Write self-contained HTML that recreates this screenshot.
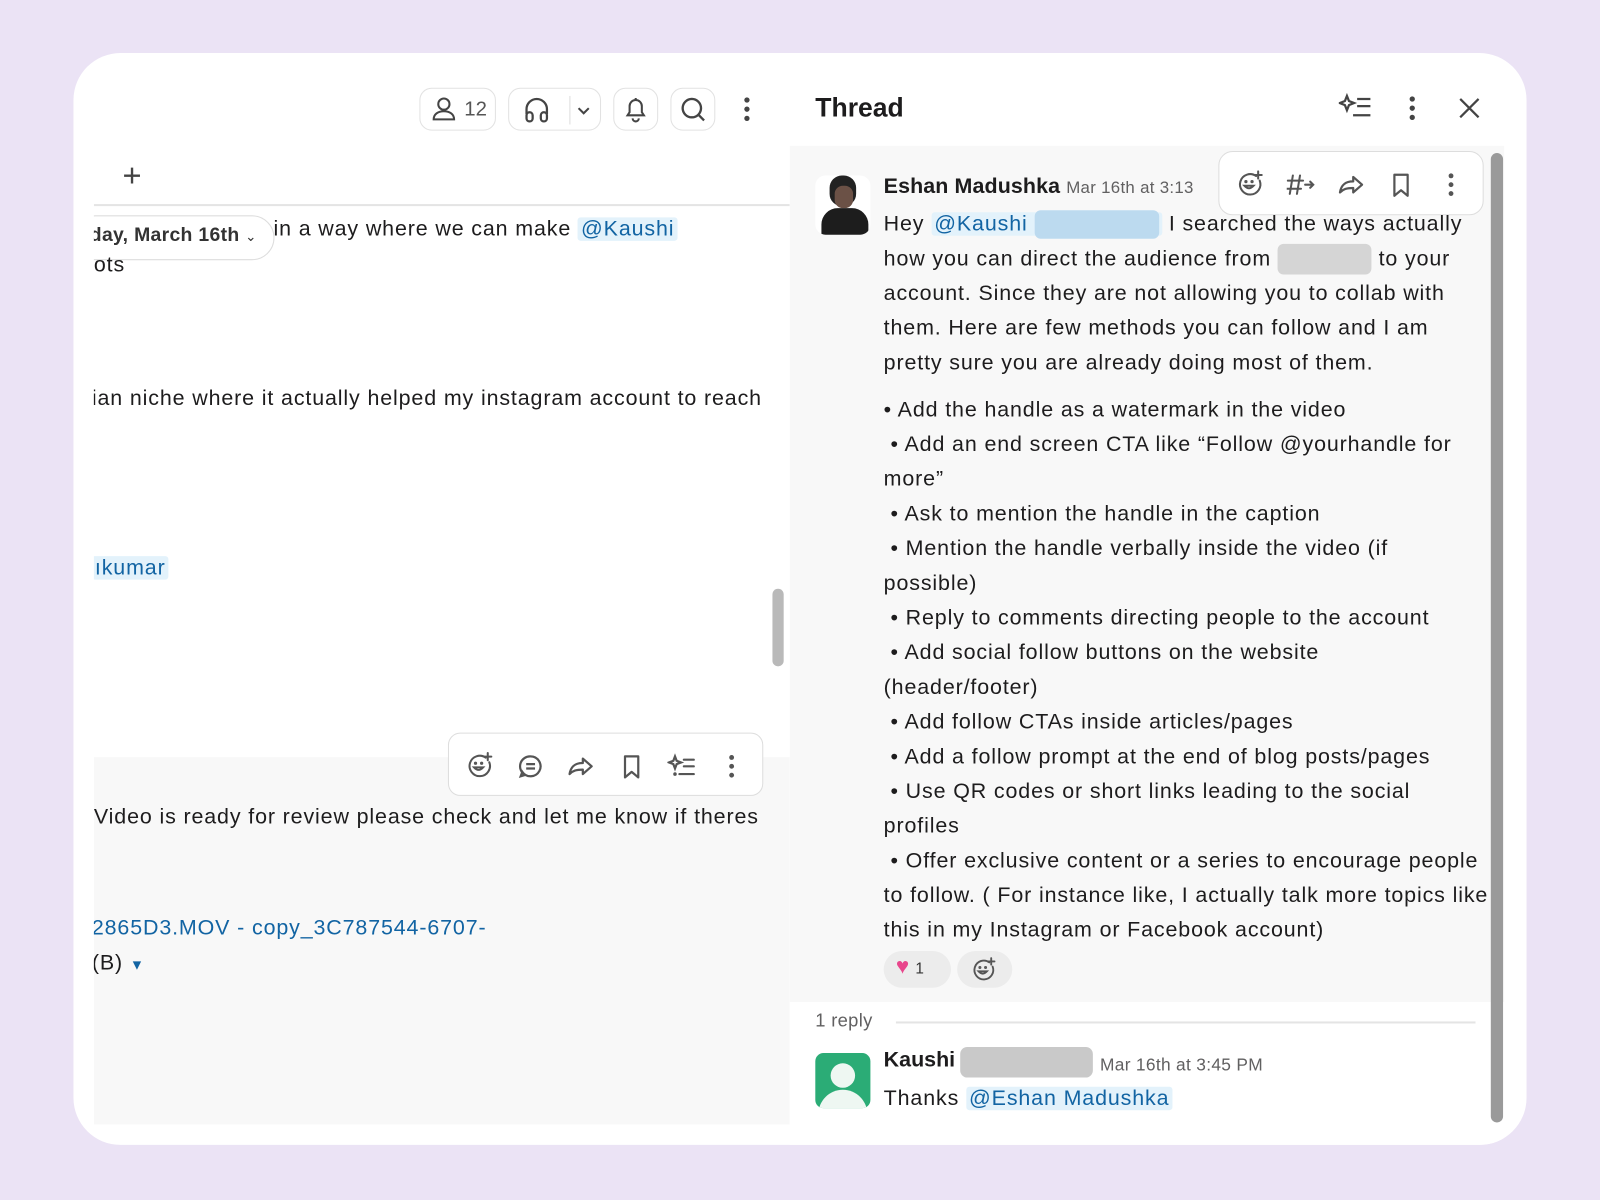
<!DOCTYPE html>
<html><head><meta charset="utf-8"><style>
*{margin:0;padding:0;box-sizing:border-box}
html,body{width:1600px;height:1200px;overflow:hidden;background:#ebe3f5}
#s{position:absolute;left:0;top:0;width:1568px;height:1176px;transform:scale(1.020408);transform-origin:0 0;font-family:"Liberation Sans",sans-serif;color:#1d1c1d}
.card{position:absolute;left:72px;top:52px;width:1424px;height:1070px;background:#fff;border-radius:46px;overflow:hidden}
.a{position:absolute;white-space:nowrap}
.t{font-size:21px;line-height:34px;letter-spacing:0.85px}
.m{background:#e3f2fb;color:#1264a3;border-radius:3px;padding:0 3px}
.btn{position:absolute;border:1.5px solid #e2e2e2;border-radius:12px;height:42px;background:#fff}
svg{position:absolute}
</style></head><body><div id="s">
<svg width="0" height="0" style="position:absolute"><defs>
<g id="emo" fill="none" stroke="#555" stroke-width="2" stroke-linecap="round"><path d="M19 5.5A10 10 0 1 0 22.5 10"/><circle cx="9" cy="11" r="0.6" fill="#555"/><circle cx="15" cy="11" r="0.6" fill="#555"/><path d="M7.5 15q4.5 5 9 0z"/><path d="M21 1v7M17.5 4.5h7"/></g>
<g id="fwd" fill="none" stroke="#555" stroke-width="2" stroke-linejoin="round"><path d="M14 5l8 7-8 7v-4c-6 0-9 1-12 4 1-6 4-10 12-10z"/></g>
<g id="bm" fill="none" stroke="#555" stroke-width="2" stroke-linejoin="round"><path d="M6 3h12v19l-6-5-6 5z"/></g>
<g id="dots" fill="#555"><circle cx="12" cy="4" r="2.2"/><circle cx="12" cy="12" r="2.2"/><circle cx="12" cy="20" r="2.2"/></g>
<g id="spk" fill="none" stroke="#555" stroke-width="2" stroke-linecap="round"><path d="M6 3l1.5 4 4 1.5-4 1.5L6 14l-1.5-4-4-1.5 4-1.5z"/><path d="M14 6h9M14 12h9M10 19h13"/><circle cx="6" cy="19" r="0.6" fill="#555"/></g>
</defs></svg>
<div class="card">
 <div class="a" style="left:20px;top:0;width:682px;height:1070px;overflow:hidden">
  <div class="a" style="left:0;top:690px;width:682px;height:360px;background:#f8f8f8"></div>
  <div class="a" style="left:0;top:148px;width:682px;height:2px;background:#e4e4e4"></div>
  <div class="btn" style="left:319px;top:34px;width:75px"></div>
  <svg style="left:328px;top:40px" width="30" height="30" viewBox="0 0 30 30" fill="none" stroke="#444" stroke-width="2"><circle cx="15" cy="10" r="5.5"/><path d="M5 25c0-5 4-8 10-8s10 3 10 8z"/></svg>
  <div class="a" style="left:363px;top:44px;font-size:20px;color:#555">12</div>
  <div class="btn" style="left:406px;top:34px;width:91px"></div>
  <div class="a" style="left:466px;top:42px;width:1px;height:28px;background:#ddd"></div>
  <svg style="left:418px;top:40px" width="32" height="32" viewBox="0 0 32 32" fill="none" stroke="#444" stroke-width="2.2"><path d="M6 20v-5a10 10 0 0 1 20 0v5"/><rect x="6" y="18" width="6" height="9" rx="3"/><rect x="20" y="18" width="6" height="9" rx="3"/></svg>
  <svg style="left:470px;top:46px" width="20" height="20" viewBox="0 0 20 20" fill="none" stroke="#444" stroke-width="2"><path d="M5 8l5 5 5-5"/></svg>
  <div class="btn" style="left:509px;top:34px;width:44px"></div>
  <svg style="left:516px;top:40px" width="30" height="30" viewBox="0 0 30 30" fill="none" stroke="#444" stroke-width="2"><path d="M7 21h16l-2-3v-6a6 6 0 0 0-12 0v6z"/><path d="M12 24a3 3 0 0 0 6 0"/><path d="M15 4v2"/></svg>
  <div class="btn" style="left:565px;top:34px;width:44px"></div>
  <svg style="left:572px;top:40px" width="30" height="30" viewBox="0 0 30 30" fill="none" stroke="#444" stroke-width="2.3"><circle cx="14" cy="14" r="9"/><path d="M21 21l5 5"/></svg>
  <svg style="left:630px;top:40px" width="20" height="30" viewBox="0 0 20 30" fill="#444"><circle cx="10" cy="6" r="2.6"/><circle cx="10" cy="15" r="2.6"/><circle cx="10" cy="24" r="2.6"/></svg>
  <div class="a" style="left:28px;top:100px;font-size:32px;color:#444;line-height:40px">+</div>
  <div class="a" style="left:-20px;top:159px;width:197px;height:44px;border:1.5px solid #ddd;border-radius:22px;background:#fff"></div>
  <div class="a" style="left:-4px;top:168px;font-size:19px;font-weight:bold;color:#333;letter-spacing:0.3px">day, March 16th <span style="font-size:13px;font-weight:normal">⌄</span></div>
  <div class="a t" style="left:176px;top:156px">in a way where we can make <span class="m">@Kaushi</span></div>
  <div class="a t" style="left:0;top:191px">ots</div>
  <div class="a t" style="left:-2px;top:322px">ian niche where it actually helped my instagram account to reach</div>
  <div class="a t" style="left:-2px;top:488px"><span class="m">ıkumar</span></div>
  <div class="a" style="left:665px;top:525px;width:11px;height:76px;border-radius:6px;background:#b9b9b9"></div>
  <div class="a" style="left:347px;top:666px;width:309px;height:62px;border:1.5px solid #ddd;border-radius:12px;background:#fff"></div>
  <svg style="left:365px;top:685px" width="26" height="26" viewBox="0 0 26 26"><use href="#emo"/></svg>
  <svg style="left:415px;top:686px" width="26" height="26" viewBox="0 0 24 24" fill="none" stroke="#555" stroke-width="2"><path d="M12 3a9 9 0 1 1-7.5 14L3 21l4-1.2A9 9 0 0 1 12 3z"/><path d="M8 10h8M8 14h8"/></svg>
  <svg style="left:464px;top:686px" width="26" height="26" viewBox="0 0 24 24"><use href="#fwd"/></svg>
  <svg style="left:514px;top:686px" width="26" height="26" viewBox="0 0 24 24"><use href="#bm"/></svg>
  <svg style="left:562px;top:686px" width="28" height="26" viewBox="0 0 24 24"><use href="#spk"/></svg>
  <svg style="left:612px;top:686px" width="26" height="26" viewBox="0 0 24 24"><use href="#dots"/></svg>
  <div class="a t" style="left:0;top:732px">Video is ready for review please check and let me know if theres</div>
  <div class="a t" style="left:-2px;top:841px;color:#1264a3">2865D3.MOV - copy_3C787544-6707-</div>
  <div class="a t" style="left:-2px;top:875px">(B) <span style="color:#1264a3;font-size:14px">▼</span></div>
 </div>
 <div class="a" style="left:702px;top:20px;width:700px;height:1050px;background:#fff"></div>
 <div class="a" style="left:702px;top:91px;width:700px;height:839px;background:#f8f8f8"></div>
 <div class="a" style="left:727px;top:38px;font-size:26px;font-weight:bold">Thread</div>
 <svg style="left:1240px;top:38px" width="34" height="30" viewBox="0 0 34 30" fill="none" stroke="#444" stroke-width="2.2"><path d="M8 4l2 5 5 2-5 2-2 5-2-5-5-2 5-2z"/><path d="M18 7h13M18 14h13M14 23h17"/></svg>
 <svg style="left:1302px;top:40px" width="20" height="30" viewBox="0 0 20 30" fill="#444"><circle cx="10" cy="5" r="2.6"/><circle cx="10" cy="14" r="2.6"/><circle cx="10" cy="23" r="2.6"/></svg>
 <svg style="left:1356px;top:42px" width="24" height="24" viewBox="0 0 24 24" stroke="#444" stroke-width="2.2"><path d="M3 3l18 18M21 3L3 21"/></svg>
 <div class="a" style="left:1389px;top:98px;width:12px;height:950px;border-radius:6px;background:#9a9a9a"></div>
 <div class="a" style="left:727px;top:120px;width:54px;height:58px;border-radius:10px;background:#fff;overflow:hidden">
  <div class="a" style="left:14px;top:0;width:26px;height:30px;border-radius:12px;background:#222"></div>
  <div class="a" style="left:19px;top:10px;width:18px;height:22px;border-radius:8px;background:#6b5146"></div>
  <div class="a" style="left:6px;top:32px;width:46px;height:30px;border-radius:16px 16px 0 0;background:#1d1d1d"></div>
 </div>
 <div class="a" style="left:794px;top:119px;font-size:21px;font-weight:bold;letter-spacing:0.1px">Eshan Madushka <span style="font-weight:normal;font-size:16.5px;color:#616061;letter-spacing:0.3px">Mar 16th at 3:13</span></div>
 <div class="a" style="left:1122px;top:96px;width:260px;height:63px;border:1.5px solid #ddd;border-radius:14px;background:#fff"></div>
 <svg style="left:1140px;top:115px" width="26" height="26" viewBox="0 0 26 26"><use href="#emo"/></svg>
 <svg style="left:1189px;top:116px" width="28" height="26" viewBox="0 0 28 24" fill="none" stroke="#555" stroke-width="2" stroke-linecap="round"><path d="M6 3L3 21M13 3l-3 18M1 8h15M0 16h14M18 12h8M23 9l3 3-3 3"/></svg>
 <svg style="left:1239px;top:116px" width="26" height="26" viewBox="0 0 24 24"><use href="#fwd"/></svg>
 <svg style="left:1288px;top:116px" width="26" height="26" viewBox="0 0 24 24"><use href="#bm"/></svg>
 <svg style="left:1337px;top:116px" width="26" height="26" viewBox="0 0 24 24"><use href="#dots"/></svg>
 <div class="a t" style="left:794px;top:151px">Hey <span class="m">@Kaushi <span style="display:inline-block;width:122px;height:28px;vertical-align:middle;background:#bcdaef;border-radius:6px"></span></span> I searched the ways actually</div>
 <div class="a t" style="left:794px;top:185px">how you can direct the audience from <span style="display:inline-block;width:92px;height:30px;vertical-align:middle;background:#d5d5d5;border-radius:6px"></span> to your</div>
 <div class="a t" style="left:794px;top:219px">account. Since they are not allowing you to collab with</div>
 <div class="a t" style="left:794px;top:253px">them. Here are few methods you can follow and I am</div>
 <div class="a t" style="left:794px;top:287px">pretty sure you are already doing most of them.</div>
 <div class="a t" style="left:794px;top:333px">• Add the handle as a watermark in the video</div>
 <div class="a t" style="left:794px;top:367px">&nbsp;• Add an end screen CTA like “Follow @yourhandle for</div>
 <div class="a t" style="left:794px;top:401px">more”</div>
 <div class="a t" style="left:794px;top:435px">&nbsp;• Ask to mention the handle in the caption</div>
 <div class="a t" style="left:794px;top:469px">&nbsp;• Mention the handle verbally inside the video (if</div>
 <div class="a t" style="left:794px;top:503px">possible)</div>
 <div class="a t" style="left:794px;top:537px">&nbsp;• Reply to comments directing people to the account</div>
 <div class="a t" style="left:794px;top:571px">&nbsp;• Add social follow buttons on the website</div>
 <div class="a t" style="left:794px;top:605px">(header/footer)</div>
 <div class="a t" style="left:794px;top:639px">&nbsp;• Add follow CTAs inside articles/pages</div>
 <div class="a t" style="left:794px;top:673px">&nbsp;• Add a follow prompt at the end of blog posts/pages</div>
 <div class="a t" style="left:794px;top:707px">&nbsp;• Use QR codes or short links leading to the social</div>
 <div class="a t" style="left:794px;top:741px">profiles</div>
 <div class="a t" style="left:794px;top:775px">&nbsp;• Offer exclusive content or a series to encourage people</div>
 <div class="a t" style="left:794px;top:809px">to follow. ( For instance like, I actually talk more topics like</div>
 <div class="a t" style="left:794px;top:843px">this in my Instagram or Facebook account)</div>
 <div class="a" style="left:794px;top:880px;width:66px;height:36px;border-radius:18px;background:#ececec"></div>
 <div class="a" style="left:806px;top:882px;font-size:22px;color:#e8468c">♥<span style="color:#333;font-size:15px;margin-left:6px">1</span></div>
 <div class="a" style="left:866px;top:880px;width:54px;height:36px;border-radius:18px;background:#ececec"></div>
 <svg style="left:880px;top:886px" width="24" height="24" viewBox="0 0 26 26"><use href="#emo"/></svg>
 <div class="a" style="left:727px;top:938px;font-size:18px;color:#616061;letter-spacing:0.3px">1 reply</div>
 <div class="a" style="left:806px;top:949px;width:568px;height:2px;background:#e4e4e4"></div>
 <div class="a" style="left:727px;top:980px;width:54px;height:54px;border-radius:8px;background:#2bac76;overflow:hidden">
  <div class="a" style="left:15px;top:10px;width:24px;height:24px;border-radius:50%;background:#eef7f2"></div>
  <div class="a" style="left:3px;top:36px;width:48px;height:30px;border-radius:24px 24px 0 0;background:#eef7f2"></div>
 </div>
 <div class="a" style="left:794px;top:975px;font-size:21px;font-weight:bold">Kaushi</div>
 <div class="a" style="left:869px;top:974px;width:130px;height:30px;border-radius:7px;background:#c9c9c9"></div>
 <div class="a" style="left:1006px;top:982px;font-size:17px;color:#616061;letter-spacing:0.3px">Mar 16th at 3:45 PM</div>
 <div class="a t" style="left:794px;top:1008px">Thanks <span class="m">@Eshan Madushka</span></div>
</div>
</div></body></html>
